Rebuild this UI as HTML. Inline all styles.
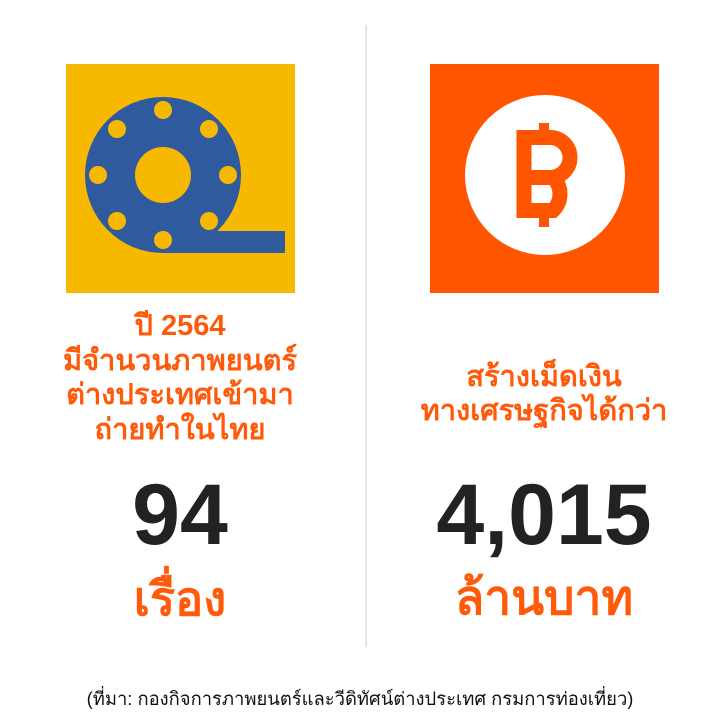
<!DOCTYPE html>
<html><head><meta charset="utf-8"><style>
body{margin:0;width:720px;height:720px;background:#fff;position:relative;overflow:hidden;font-family:"Liberation Sans","Noto Sans CJK SC","WenQuanYi Zen Hei",sans-serif}
.t{position:absolute;text-align:center;white-space:nowrap;font-weight:bold}
.o{color:#FF5A0A}
</style></head><body>
<div style="position:absolute;left:365px;top:25px;width:2px;height:622px;background:#e6e6e6"></div>
<svg style="position:absolute;left:0;top:0" width="720" height="300">
<rect x="66" y="64" width="229" height="229" fill="#F7B900"/>
<rect x="163" y="231" width="122" height="22" fill="#2F5A9E"/>
<circle cx="163" cy="175" r="78" fill="#2F5A9E"/>
<circle cx="163" cy="175" r="28" fill="#F7B900"/>
<g fill="#F7B900">
<circle cx="163" cy="110" r="9"/><circle cx="163" cy="240" r="9"/>
<circle cx="98" cy="175" r="9"/><circle cx="228" cy="175" r="9"/>
<circle cx="117" cy="129" r="9"/><circle cx="209" cy="129" r="9"/>
<circle cx="117" cy="221" r="9"/><circle cx="209" cy="221" r="9"/>
</g>
<rect x="430" y="64" width="229" height="229" fill="#FF5500"/>
<circle cx="545" cy="175" r="80" fill="#fff"/>
<g fill="none" stroke="#FF5500" stroke-width="15">
<path d="M524 130 V218 M517 137.5 H550 A20 20 0 0 1 550 177.5 H524 M524 177.5 H553 A23 23 0 0 1 553 210.5 H517"/>
<path d="M544 123 V137 M544 211 V227" stroke-width="10"/>
</g>
</svg>
<div class="t o" style="left:0;width:360px;top:309px;font-size:29px;line-height:34.5px">ปี 2564<br>มีจำนวนภาพยนตร์<br>ต่างประเทศเข้ามา<br>ถ่ายทำในไทย</div>
<div class="t o" style="left:364px;width:360px;top:360px;font-size:29px;line-height:34px">สร้างเม็ดเงิน<br>ทางเศรษฐกิจได้กว่า</div>
<div class="t" style="left:0;width:360px;top:470px;font-size:86px;line-height:90px;color:#222;font-weight:900">94</div>
<div class="t" style="left:364px;width:360px;top:470px;font-size:86px;line-height:90px;color:#222;font-weight:900">4,015</div>
<div class="t o" style="left:0;width:360px;top:572px;font-size:47px;line-height:54px">เรื่อง</div>
<div class="t o" style="left:364px;width:360px;top:572px;font-size:48px;line-height:54px">ล้านบาท</div>
<div class="t" style="left:0;width:720px;top:688px;font-size:18.4px;line-height:22px;color:#111;font-weight:normal">(ที่มา: กองกิจการภาพยนตร์และวีดิทัศน์ต่างประเทศ กรมการท่องเที่ยว)</div>
</body></html>
